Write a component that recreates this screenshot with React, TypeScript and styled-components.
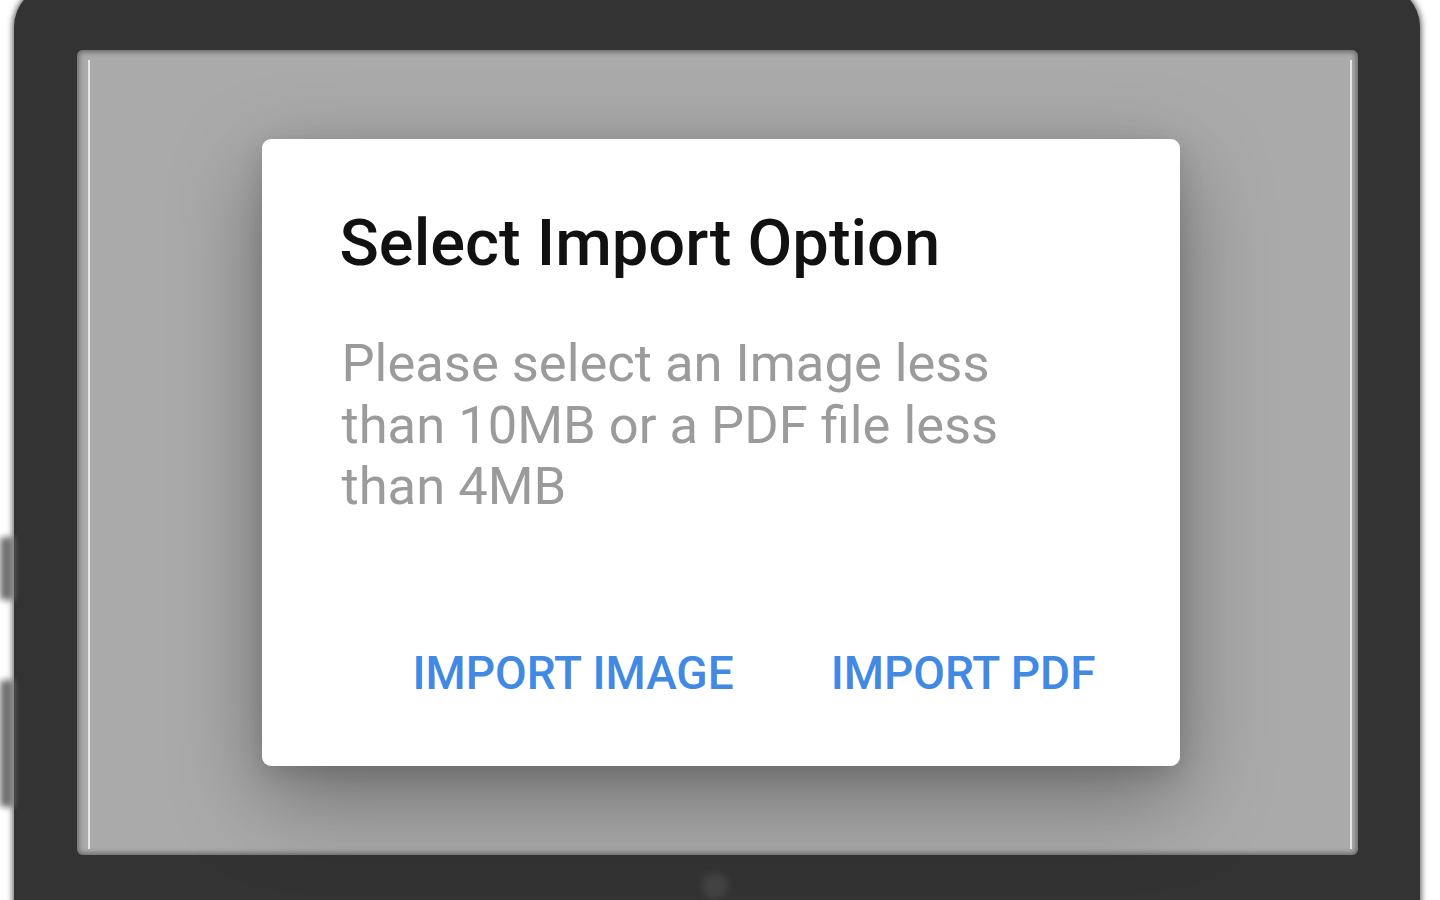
import styled, { createGlobalStyle } from "styled-components";

const GlobalStyle = createGlobalStyle`
  html, body {
    margin: 0;
    padding: 0;
    background: #ffffff;
    overflow: hidden;
  }
  * {
    box-sizing: border-box;
  }
`;

const Page = styled.main`
  width: 1440px;
  height: 900px;
  overflow: hidden;
  position: relative;
  background: #ffffff;
`;

const Device = styled.div`
  position: relative;
  margin: -15px 0 0 14px;
  width: 1406px;
  height: 990px;
  border-radius: 42px;
  background: #333333;
  box-shadow: 0 0 6px 1px rgba(51, 51, 51, 0.85);
  padding: 65px 0 0 63px;
`;

const SideButton = styled.span<{ $top: number; $height: number }>`
  position: absolute;
  left: -14px;
  top: ${(p) => p.$top}px;
  width: 14px;
  height: ${(p) => p.$height}px;
  border-radius: 4px 0 0 4px;
  background: #707070;
  filter: blur(3px);
`;

const HomeButton = styled.span`
  position: absolute;
  left: 50%;
  top: 888px;
  width: 26px;
  height: 26px;
  margin-left: -15px;
  border-radius: 50%;
  background: #424242;
  filter: blur(3px);
`;

const Screen = styled.div`
  position: relative;
  width: 1281px;
  height: 805px;
  border-radius: 6px;
  background: #aaaaaa;
  box-shadow: inset 0 0 5px 2px rgba(51, 51, 51, 0.55);
  display: flex;
  align-items: center;
  justify-content: center;
  padding-left: 6px;

  &::before,
  &::after {
    content: "";
    position: absolute;
    top: 10px;
    bottom: 6px;
    width: 2px;
    background: rgba(255, 255, 255, 0.7);
    filter: blur(0.5px);
  }
  &::before {
    left: 11px;
  }
  &::after {
    right: 6px;
  }
`;

const Dialog = styled.section`
  width: 918px;
  height: 627px;
  background: #ffffff;
  border-radius: 9px;
  box-shadow: 0 30px 90px rgba(0, 0, 0, 0.36), 0 8px 24px rgba(0, 0, 0, 0.12);
  padding: 66px 84px 0 78px;
  display: flex;
  flex-direction: column;
  font-family: Roboto, "Noto Sans", sans-serif;
`;

const Title = styled.h2`
  margin: 0;
  font-size: 65px;
  font-weight: 500;
  line-height: 76px;
  color: #111111;
`;

const Message = styled.p`
  margin: 52px 0 0 2px;
  width: 700px;
  font-size: 52.5px;
  font-weight: 400;
  line-height: 61.5px;
  color: #9b9b9b;
`;

const Actions = styled.div`
  margin-top: auto;
  margin-bottom: 65px;
  display: flex;
  justify-content: flex-end;
  gap: 97px;
`;

const TextButton = styled.button`
  border: none;
  background: none;
  padding: 0;
  font-family: Roboto, "Noto Sans", sans-serif;
  font-size: 46px;
  font-weight: 500;
  line-height: 56px;
  color: #4189e2;
  text-transform: uppercase;
  cursor: pointer;
`;

export default function App() {
  return (
    <Page>
      <GlobalStyle />
      <Device>
        <SideButton $top={552} $height={63} />
        <SideButton $top={695} $height={127} />
        <Screen>
          <Dialog role="dialog" aria-labelledby="import-title">
            <Title id="import-title">Select Import Option</Title>
            <Message>
              Please select an Image less than 10MB or a PDF file less than 4MB
            </Message>
            <Actions>
              <TextButton>Import Image</TextButton>
              <TextButton>Import PDF</TextButton>
            </Actions>
          </Dialog>
        </Screen>
        <HomeButton />
      </Device>
    </Page>
  );
}
